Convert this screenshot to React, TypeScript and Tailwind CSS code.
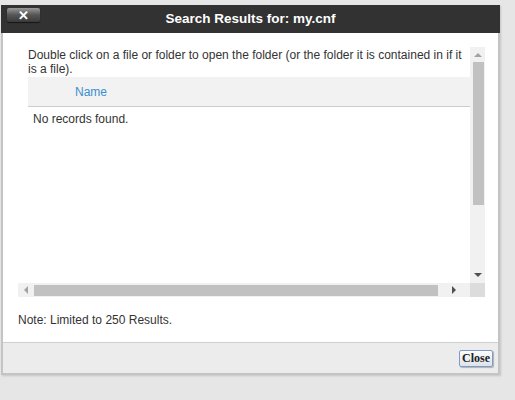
import React from 'react';

// Drawn scrollbar arrow, as a small css triangle
function Arrow({ dir, dark }: { dir: 'up' | 'down' | 'left' | 'right'; dark?: boolean }) {
  const color = dark ? '#505050' : '#a3a3a3';
  const style: React.CSSProperties =
    dir === 'up'
      ? { borderLeft: '4px solid transparent', borderRight: '4px solid transparent', borderBottom: `4px solid ${color}` }
      : dir === 'down'
      ? { borderLeft: '4px solid transparent', borderRight: '4px solid transparent', borderTop: `4px solid ${color}` }
      : dir === 'left'
      ? { borderTop: '4px solid transparent', borderBottom: '4px solid transparent', borderRight: `4px solid ${color}` }
      : { borderTop: '4px solid transparent', borderBottom: '4px solid transparent', borderLeft: `4px solid ${color}` };
  return <div className="w-0 h-0" style={style} />;
}

export default function App() {
  return (
    <div className="w-[515px] h-[400px] bg-[#e6e6e6] pt-[5px] pl-[1px] font-['Liberation_Sans',Arial,sans-serif] text-[12px] text-[#333]">
      <div className="w-[499px] flex flex-col border-x-[2px] border-b-[2px] border-[#c4c4c4] shadow-[1px_1px_2px_rgba(0,0,0,0.15)]">
        {/* title bar */}
        <div className="relative h-[28px] -mx-[2px] bg-[#323232] flex items-center justify-center">
          <button className="absolute left-[6px] top-[3px] w-[33px] h-[14px] rounded-[2px] bg-gradient-to-b from-[#9a9a9a] via-[#555] to-[#3a3a3a] shadow-[0_1px_1px_rgba(0,0,0,0.6)] flex items-center justify-center text-white text-[13px] font-bold leading-none">
            ✕
          </button>
          <span className="text-white font-bold text-[13.5px]">Search Results for: my.cnf</span>
        </div>

        {/* body */}
        <div className="h-[309px] bg-white pl-[15px] pt-[14px]">
          <div className="w-[467px] h-[250px] grid grid-cols-[452px_15px] grid-rows-[236px_14px]">
            <div className="overflow-hidden pl-[10px] pt-[1px]">
              <p className="w-[437px] leading-[14px]">
                Double click on a file or folder to open the folder (or the folder it is contained in if it is a file).
              </p>
              <div className="mt-[1px] h-[30px] bg-[#f2f2f2] border-b border-[#ccc] flex items-center">
                <span className="ml-[47px] text-[#3c8fd0]">Name</span>
              </div>
              <div className="pl-[5px] pt-[3px]">No records found.</div>
            </div>
            <div className="bg-[#f1f1f1] flex flex-col items-center">
              <div className="h-[15px] flex items-center justify-center">
                <Arrow dir="up" />
              </div>
              <div className="w-[11px] ml-[2px] h-[143px] bg-[#c1c1c1]" />
              <div className="flex-1" />
              <div className="h-[16px] flex items-center justify-center">
                <Arrow dir="down" dark />
              </div>
            </div>
            <div className="bg-[#f1f1f1] flex items-center">
              <div className="w-[16px] flex justify-center">
                <Arrow dir="left" />
              </div>
              <div className="w-[404px] h-[11px] mt-[1px] bg-[#c1c1c1]" />
              <div className="flex-1 flex justify-center">
                <Arrow dir="right" dark />
              </div>
            </div>
            <div className="bg-[#dcdcdc]" />
          </div>
          <div className="mt-[14px]">Note: Limited to 250 Results.</div>
        </div>

        {/* footer */}
        <div className="h-[31px] bg-[#ececec] border-t border-[#cfcfcf] flex items-center justify-end pr-[5px]">
          <button className="h-[17px] px-[2px] border border-[#7f9ac6] rounded-[2px] bg-gradient-to-b from-[#fdfdfd] to-[#dde3ec] shadow-[1px_1px_1px_rgba(0,0,0,0.25)] font-['Liberation_Serif',serif] font-bold text-[12px] text-[#222] leading-none">
            Close
          </button>
        </div>
      </div>
    </div>
  );
}
